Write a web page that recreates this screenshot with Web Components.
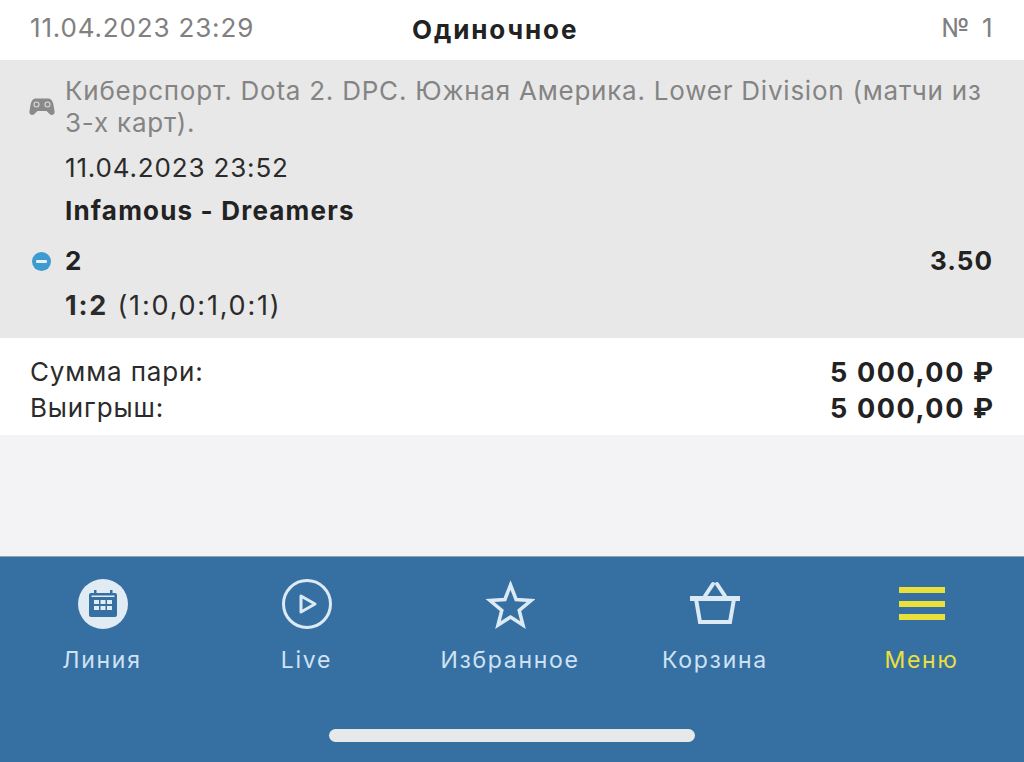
<!DOCTYPE html>
<html lang="ru">
<head>
<meta charset="UTF-8">
<title>Одиночное</title>
<style>
    html, body { margin: 0; height: 100%; }
    body { font-family: Inter, "Liberation Sans", sans-serif; background: #f3f2f5; color: #222; }
    bet-screen { height: 762px; }
</style>
<script>
    function tpl(html) {
        const t = document.createElement("template")
        t.innerHTML = html
        return t
    }

    class Base extends HTMLElement {
        constructor() {
            super()
            this.attachShadow({ mode: "open" })
            this.shadowRoot.append(this.constructor.tpl.content.cloneNode(true))
        }
    }

    class BetScreen extends Base {
        static tpl = tpl(`<style>
            :host { display: flex; flex-direction: column; }
            ::slotted(bet-nav) { margin-top: auto; }
        </style><slot></slot>`)
    }

    class BetHeader extends Base {
        static tpl = tpl(`<style>
            :host { display: grid; grid-template-columns: 382px auto 1fr; align-items: center; height: 60px; padding: 0 30px 5px 30px; box-sizing: border-box; background: #fff; font-size: 26px; letter-spacing: .84px; color: #808080; }
            .t { color: #222; font-weight: 700; font-size: 26px; letter-spacing: 1.9px; padding-top: 4px; }
            .r { text-align: right; word-spacing: 2px; letter-spacing: 1.5px; }
        </style><div><slot name="date"></slot></div><div class="t"><slot name="title"></slot></div><div class="r"><slot name="num"></slot></div>`)
    }

    class BetEvent extends Base {
        static tpl = tpl(`<style>
            :host { display: block; height: 278px; box-sizing: border-box; background: #e8e8e8; padding: 15px 31px 0 65px; position: relative; font-size: 26px; letter-spacing: .84px; color: #2b2b2b; }
            .league { color: #848484; line-height: 32px; height: 66px; margin-right: -8px; position: relative; letter-spacing: .77px; }
            .game { position: absolute; left: -36px; top: 22px; width: 26px; height: 20px; }
            .date { margin-top: 12px; line-height: 30px; }
            .teams { margin-top: 13px; line-height: 30px; font-weight: 700; color: #222; letter-spacing: 1.18px; }
            .pick { margin-top: 20px; display: flex; justify-content: space-between; line-height: 30px; font-weight: 700; font-size: 26px; letter-spacing: 1px; color: #222; position: relative; }
            .dot { position: absolute; left: -33px; top: 6px; width: 19px; height: 19px; border-radius: 50%; background: #3d9bd0; display: flex; align-items: center; justify-content: center; }
            .dot::after { content: ""; width: 11px; height: 3px; background: #e8eef2; border-radius: 1px; }
            .score { margin-top: 15px; line-height: 30px; font-size: 27px; letter-spacing: 1.8px; }
            .score b { font-size: 28px; letter-spacing: 2.8px; color: #222; }
        </style>
        <div class="league">
            <svg class="game" viewBox="0 0 26 20" fill="#8a8a8a"><path d="M7 1.500h12c3 0 4.500 2 5.300 5.500l1.300 7.500c.4 3-2.800 4.600-5 2.400L17.500 14h-9l-3.100 2.900c-2.200 2.200-5.400.6-5-2.400L1.700 7C2.500 3.500 4 1.500 7 1.500z"/><circle cx="7.500" cy="7.500" r="2.500" fill="none" stroke="#dcdcdc" stroke-width="1.100"/><circle cx="18.500" cy="7.500" r="2.500" fill="none" stroke="#dcdcdc" stroke-width="1.100"/></svg>
            <slot name="league"></slot>
        </div>
        <div class="date"><slot name="date"></slot></div>
        <div class="teams"><slot name="teams"></slot></div>
        <div class="pick"><span class="dot"></span><span><slot name="pick"></slot></span><span><slot name="odds"></slot></span></div>
        <div class="score"><slot name="score"></slot></div>`)
    }

    class BetSummary extends Base {
        static tpl = tpl(`<style>
            :host { display: block; height: 97px; box-sizing: border-box; background: #fff; padding: 16px 31px 0 30px; font-size: 26px; letter-spacing: .85px; color: #2b2b2b; }
        </style><slot></slot>`)
    }

    class SummaryRow extends Base {
        static tpl = tpl(`<style>
            :host { display: flex; justify-content: space-between; height: 36px; line-height: 36px; }
            .v { font-weight: 700; font-size: 27px; letter-spacing: 1.6px; margin-right: -1.6px; padding-top: 1px; color: #222; }
        </style><span><slot name="label"></slot></span><span class="v"><slot name="value"></slot></span>`)
    }

    class BetNav extends Base {
        static tpl = tpl(`<style>
            :host { display: flex; flex-direction: column; height: 206px; box-sizing: border-box; background: #3670a3; border-top: 1px solid #8fa3b4; }
            .items { display: grid; grid-template-columns: 204px 205px 202px 208px 205px; padding: 21px 0 0; }
            .home { width: 366px; height: 13px; border-radius: 7px; background: #e6e8e9; margin: auto auto 20px; }
        </style><div class="items"><slot></slot></div><div class="home"></div>`)
    }

    class NavItem extends Base {
        static tpl = tpl(`<style>
            :host { display: flex; flex-direction: column; align-items: center; color: #cfe2f3; font-size: 23px; letter-spacing: 1.7px; }
            :host([active]) { color: #ebe03a; }
            .i { height: 52px; display: flex; align-items: center; justify-content: center; }
            .l { margin-top: 14px; line-height: 32px; white-space: nowrap; }
        </style><div class="i"><slot name="icon"></slot></div><div class="l"><slot></slot></div>`)
    }

    customElements.define("bet-screen", BetScreen)
    customElements.define("bet-header", BetHeader)
    customElements.define("bet-event", BetEvent)
    customElements.define("bet-summary", BetSummary)
    customElements.define("summary-row", SummaryRow)
    customElements.define("bet-nav", BetNav)
    customElements.define("nav-item", NavItem)
</script>
</head>
<body>
<bet-screen>
    <bet-header>
        <span slot="date">11.04.2023 23:29</span>
        <span slot="title">Одиночное</span>
        <span slot="num">№ 1</span>
    </bet-header>
    <bet-event>
        <span slot="league">Киберспорт. Dota 2. DPC. Южная Америка. Lower Division (матчи из 3-х карт).</span>
        <span slot="date">11.04.2023 23:52</span>
        <span slot="teams">Infamous - Dreamers</span>
        <span slot="pick">2</span>
        <span slot="odds">3.50</span>
        <span slot="score"><b>1:2</b> (1:0,0:1,0:1)</span>
    </bet-event>
    <bet-summary>
        <summary-row><span slot="label">Сумма пари:</span><span slot="value">5 000,00 ₽</span></summary-row>
        <summary-row><span slot="label">Выигрыш:</span><span slot="value">5 000,00 ₽</span></summary-row>
    </bet-summary>
    <bet-nav>
        <nav-item>
            <svg slot="icon" width="50" height="50" viewBox="0 0 50 50" style="margin-left:1px"><circle cx="25" cy="25" r="25" fill="#e0ebf4"/><rect x="11" y="14" width="28" height="24" rx="2" fill="#3670a3"/><rect x="16" y="11" width="2.500" height="5" fill="#3670a3"/><rect x="32" y="11" width="2.500" height="5" fill="#3670a3"/><g fill="#e0ebf4"><rect x="13.500" y="16.500" width="23" height="1.500"/><rect x="16" y="21" width="5" height="4"/><rect x="22.500" y="21" width="5" height="4"/><rect x="29" y="21" width="5" height="4"/><rect x="16" y="27" width="5" height="4"/><rect x="22.500" y="27" width="5" height="4"/><rect x="29" y="27" width="5" height="4"/></g></svg>
            Линия
        </nav-item>
        <nav-item>
            <svg slot="icon" width="50" height="50" viewBox="0 0 50 50" fill="none" stroke="#dceaf5" stroke-width="3" stroke-linejoin="round"><circle cx="25" cy="25" r="23.500"/><path d="M19 17v16l14-8z"/></svg>
            Live
        </nav-item>
        <nav-item>
            <svg slot="icon" width="50" height="50" viewBox="0 0 50 50" fill="none" stroke="#dceaf5" stroke-width="3.500"><path d="M25.500 6l5.600 14.500 14.900 1-11.800 9.800 3.800 14.700-12.500-8-12.500 8 3.800-14.700L5 21.500l14.900-1z"/></svg>
            Избранное
        </nav-item>
        <nav-item>
            <svg slot="icon" width="50" height="50" viewBox="0 0 50 50" fill="none" stroke="#dceaf5" stroke-width="4"><path d="M0 19.500h50" stroke-width="5"/><path d="M6 20l4 23h30l4-23" stroke-width="4"/><path d="M15 17l8-12M35 17l-8-12" stroke-width="4" stroke-linecap="round"/></svg>
            Корзина
        </nav-item>
        <nav-item active>
            <svg slot="icon" width="46" height="34" viewBox="0 0 46 34" fill="#ebe03a"><rect width="46" height="6" y="0"/><rect width="46" height="6" y="14"/><rect width="46" height="6" y="27"/></svg>
            Меню
        </nav-item>
    </bet-nav>
</bet-screen>
</body>
</html>
